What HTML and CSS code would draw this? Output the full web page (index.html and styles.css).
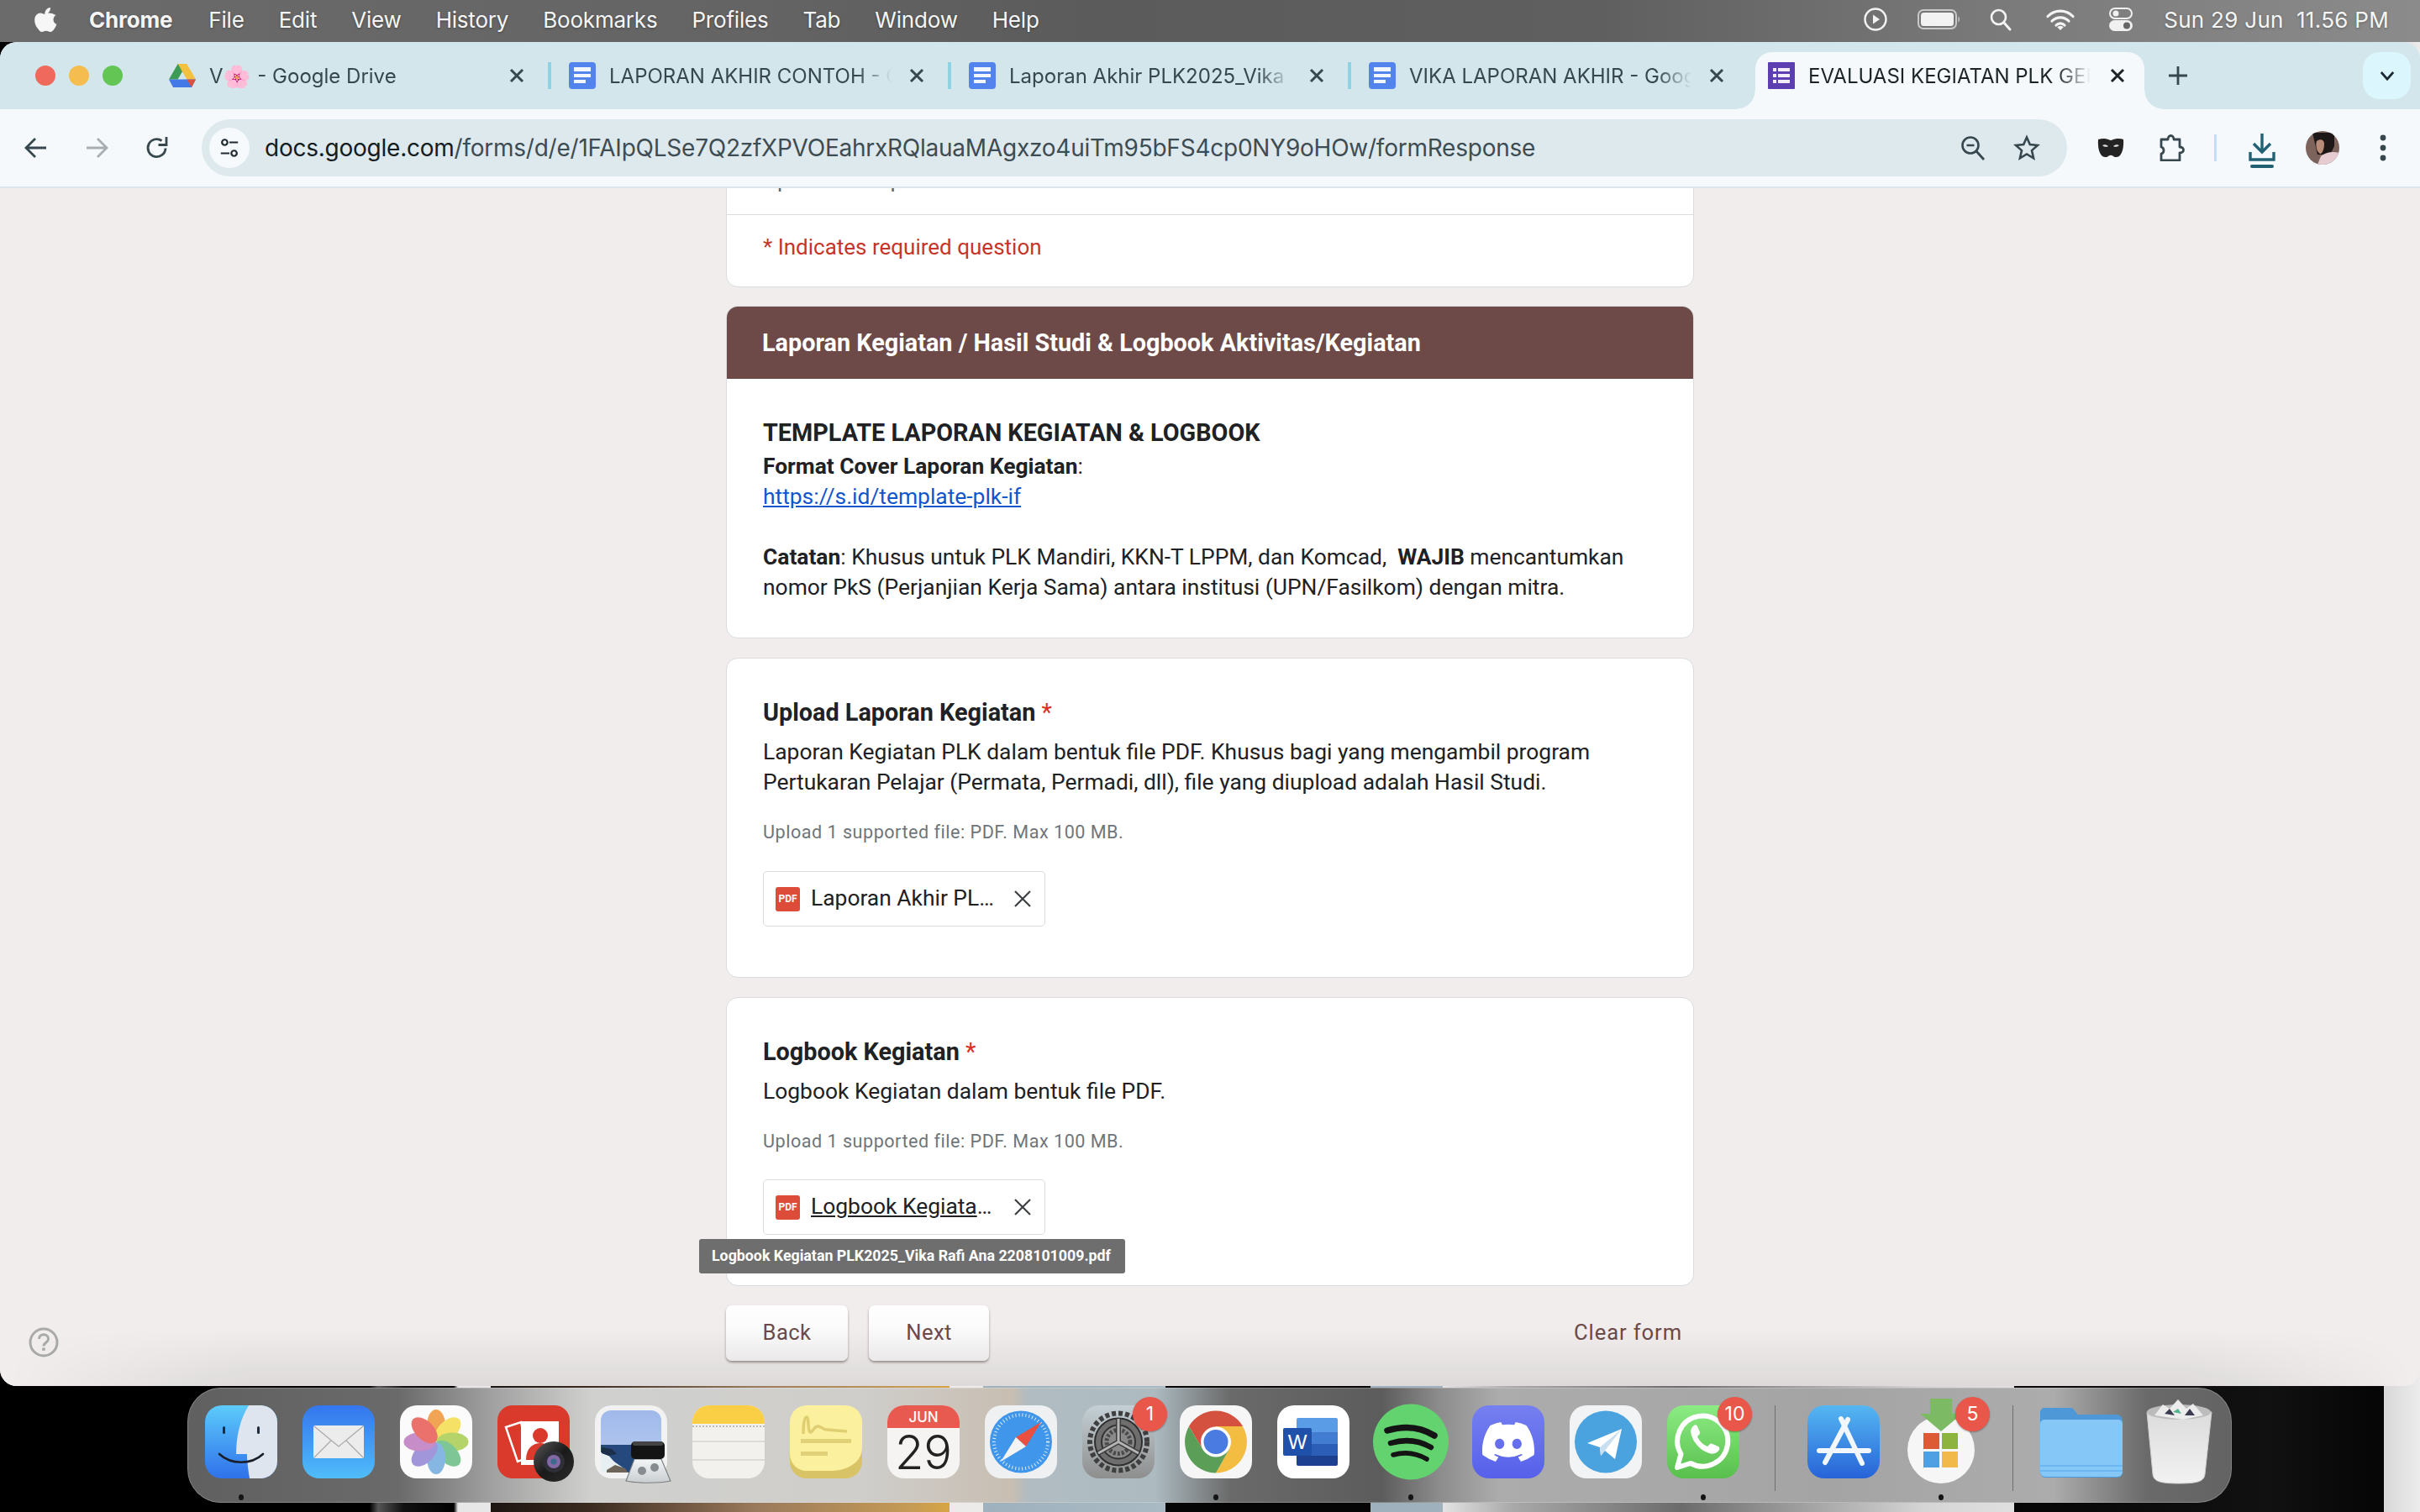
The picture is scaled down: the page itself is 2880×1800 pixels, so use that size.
FILE: index.html
```html
<!DOCTYPE html>
<html lang="en">
<head>
<meta charset="utf-8">
<title>EVALUASI KEGIATAN PLK</title>
<link rel="stylesheet" href="styles.css">
</head>
<body>
<svg class="defs" width="0" height="0">
  <defs>
    <symbol id="docs" viewBox="0 0 32 32"><rect width="32" height="32" rx="4" fill="#5383ec"/><rect x="6" y="6" width="20" height="5" fill="#f2f6fd"/><rect x="6" y="14" width="20" height="4" fill="#f2f6fd"/><rect x="6" y="21" width="14" height="4" fill="#f2f6fd"/></symbol>
    <symbol id="closex" viewBox="0 0 20 20"><path d="M3 3 17 17M17 3 3 17" fill="none" stroke="currentColor" stroke-width="3"/></symbol>
    <symbol id="thinx" viewBox="0 0 22 22"><path d="M2 2 20 20M20 2 2 20" fill="none" stroke="currentColor" stroke-width="2.2"/></symbol>
    <linearGradient id="gFinder" x1="0" y1="0" x2="0" y2="1"><stop offset="0" stop-color="#5dcbfb"/><stop offset="1" stop-color="#2f71ea"/></linearGradient>
    <linearGradient id="gMail" x1="0" y1="0" x2="0" y2="1"><stop offset="0" stop-color="#3476ee"/><stop offset="1" stop-color="#50bdf9"/></linearGradient>
    <linearGradient id="gStore" x1="0" y1="0" x2="0" y2="1"><stop offset="0" stop-color="#55b7f2"/><stop offset="1" stop-color="#2763d8"/></linearGradient>
    <linearGradient id="gSet" x1="0" y1="0" x2="0" y2="1"><stop offset="0" stop-color="#c4d0d6"/><stop offset="1" stop-color="#8e8e8e"/></linearGradient>
    <linearGradient id="gWa" x1="0" y1="0" x2="0" y2="1"><stop offset="0" stop-color="#8ceb84"/><stop offset="1" stop-color="#58c04d"/></linearGradient>
    <linearGradient id="gDis" x1="0" y1="0" x2="0" y2="1"><stop offset="0" stop-color="#7680f0"/><stop offset="1" stop-color="#5660ea"/></linearGradient>
    <linearGradient id="gTrash" x1="0" y1="0" x2="0" y2="1"><stop offset="0" stop-color="#dcdcdc"/><stop offset="1" stop-color="#f2f2f2"/></linearGradient>
    <linearGradient id="gLens" x1="0" y1="0" x2="1" y2="1"><stop offset="0" stop-color="#5a5a5a"/><stop offset=".5" stop-color="#1a1a1a"/><stop offset="1" stop-color="#2c2c2c"/></linearGradient>
    <linearGradient id="gGlass" x1="0" y1="0" x2="0" y2="1"><stop offset="0" stop-color="#f4f6f7"/><stop offset="1" stop-color="#c9ced1"/></linearGradient>
    <linearGradient id="gSky" x1="0" y1="0" x2="0" y2="1"><stop offset="0" stop-color="#a0b9ea"/><stop offset="1" stop-color="#b9cdf0"/></linearGradient>
  </defs>
</svg>

<div class="menubar">
  <div class="menu-left">
    <svg class="apple" viewBox="0 0 28 34"><path d="M20 3c.2 2.500-.8 4.300-2 5.700-1.300 1.400-2.900 2.300-4.700 2.100-.2-2.200.9-4.200 2-5.500C16.600 3.900 18.600 3 20 3zM26.500 12c-1.800 1.200-3 2.900-3 5.300 0 2.800 1.500 4.600 3.900 5.600-.8 2.200-1.700 4.100-3 5.900-1.400 2-2.700 3.200-4.500 3.200-1.900 0-2.700-1.200-5-1.200-2.400 0-3.200 1.200-5 1.200s-3.200-1.500-4.700-3.700C2.600 25.400 1.200 21.600 1.200 18c0-5.500 3.500-8.400 7-8.400 1.900 0 3.500 1.300 4.700 1.300 1.100 0 2.900-1.400 5.200-1.400 2.100 0 5.600.8 8.400 2.500z" fill="#f6f6f6"/></svg>
    <span class="menu-item menu-app">Chrome</span>
    <span class="menu-item">File</span>
    <span class="menu-item">Edit</span>
    <span class="menu-item">View</span>
    <span class="menu-item">History</span>
    <span class="menu-item">Bookmarks</span>
    <span class="menu-item">Profiles</span>
    <span class="menu-item">Tab</span>
    <span class="menu-item">Window</span>
    <span class="menu-item">Help</span>
  </div>
  <div class="menu-right">
    <svg class="mx" viewBox="0 0 30 30"><circle cx="15" cy="15" r="12.500" fill="none" stroke="#f4f4f4" stroke-width="2.400"/><path d="M12 9.500v11l8-5.500z" fill="#f4f4f4"/></svg>
    <svg class="mx-b" viewBox="0 0 52 28"><rect x="1" y="3" width="45" height="22" rx="6" fill="none" stroke="#c9c9c9" stroke-width="2"/><rect x="4" y="6" width="39" height="16" rx="3.500" fill="#f2f2f2"/><path d="M48.500 10.500c2 .8 2 6.200 0 7z" fill="#c9c9c9"/></svg>
    <svg class="mx mx-s" viewBox="0 0 30 30"><circle cx="12.500" cy="12.500" r="8.500" fill="none" stroke="#f4f4f4" stroke-width="2.600"/><path d="M18.700 18.700 26 27" stroke="#f4f4f4" stroke-width="3" stroke-linecap="round"/></svg>
    <svg class="mx-w" viewBox="0 0 36 28"><path d="M3 10.500a21 21 0 0 1 30 0M8 16a14 14 0 0 1 20 0M13 21a7 7 0 0 1 10 0" fill="none" stroke="#f4f4f4" stroke-width="3.200" stroke-linecap="round"/><path d="M18 27l-3.800-3.800a5.400 5.400 0 0 1 7.600 0z" fill="#f4f4f4"/></svg>
    <svg class="mx-c" viewBox="0 0 30 30"><rect x="2" y="2" width="26" height="12" rx="6" fill="none" stroke="#f0f0f0" stroke-width="2"/><circle cx="9" cy="8" r="3.500" fill="#f0f0f0"/><rect x="1" y="16" width="28" height="13" rx="6.500" fill="#f0f0f0"/><circle cx="22" cy="22.500" r="4" fill="#666"/></svg>
    <span class="clock">Sun 29 Jun&nbsp; 11.56 PM</span>
  </div>
</div>

<div class="window">
  <div class="tabstrip">
    <div class="lights"><span class="light red"></span><span class="light yellow"></span><span class="light green"></span></div>
    <div class="tab">
      <svg class="tab-icon" viewBox="0 0 32 28"><path d="M10.700 0h10.600L10.600 18.500 0 18.500z" fill="#3d9b55"/><path d="M21.300 0 32 18.500H21.300L10.700 0z" fill="#f4c13f"/><path d="M0 18.500h32l-5 9.500H5z" fill="#4379e6"/><path d="M21.300 18.500H32l-5 9.500z" fill="#d9533e"/></svg>
      <span class="tab-title"><span class="tab-v">V</span><span class="emoji">🌸</span> - Google Drive</span>
      <svg class="tab-x"><use href="#closex"/></svg>
    </div>
    <div class="tab">
      <svg class="tab-icon"><use href="#docs"/></svg>
      <span class="tab-title">LAPORAN AKHIR CONTOH - Google Docs</span>
      <svg class="tab-x"><use href="#closex"/></svg>
    </div>
    <div class="tab">
      <svg class="tab-icon"><use href="#docs"/></svg>
      <span class="tab-title">Laporan Akhir PLK2025_Vika Rafi Ana</span>
      <svg class="tab-x"><use href="#closex"/></svg>
    </div>
    <div class="tab tab-last">
      <svg class="tab-icon"><use href="#docs"/></svg>
      <span class="tab-title">VIKA LAPORAN AKHIR - Google Docs</span>
      <svg class="tab-x"><use href="#closex"/></svg>
    </div>
    <div class="tab tab-active">
      <svg class="tab-icon" viewBox="0 0 32 32"><rect width="32" height="32" rx="1" fill="#5e3fb1"/><g fill="#f1edf9"><rect x="6" y="7" width="4" height="4"/><rect x="6" y="14" width="4" height="4"/><rect x="6" y="21" width="4" height="4"/><rect x="12" y="7" width="14" height="4"/><rect x="12" y="14" width="14" height="4"/><rect x="12" y="21" width="14" height="4"/></g></svg>
      <span class="tab-title">EVALUASI KEGIATAN PLK GENAP</span>
      <svg class="tab-x"><use href="#closex"/></svg>
    </div>
    <svg class="newtab" viewBox="0 0 24 24"><path d="M12 1v22M1 12h22" stroke="#36474e" stroke-width="2.800" fill="none"/></svg>
    <div class="tabsearch"><svg viewBox="0 0 20 14" class="chev"><path d="M2 2l8 9 8-9" fill="none" stroke="#1c2a30" stroke-width="3"/></svg></div>
  </div>

  <div class="toolbar">
    <div class="slot"><svg class="ti" viewBox="0 0 32 32"><path d="M28 16H5M15 5 4 16l11 11" fill="none" stroke="#36474e" stroke-width="2.800"/></svg></div>
    <div class="slot"><svg class="ti" viewBox="0 0 32 32"><path d="M4 16h23M17 5l11 11-11 11" fill="none" stroke="#a6aeb2" stroke-width="2.800"/></svg></div>
    <div class="slot"><svg class="ti" viewBox="0 0 32 32"><path d="M26 16.500A10.500 10.500 0 1 1 21.500 7.500" fill="none" stroke="#36474e" stroke-width="2.800"/><path d="M27 3v9.500H17.500" fill="none" stroke="#36474e" stroke-width="2.800"/></svg></div>
    <div class="address">
      <div class="site-info"><svg viewBox="0 0 28 28" class="site-svg"><circle cx="8" cy="7" r="3.500" fill="none" stroke="#1f2a30" stroke-width="2.400"/><path d="M14 7h11M3 21h11" stroke="#1f2a30" stroke-width="2.400"/><circle cx="20" cy="21" r="3.500" fill="none" stroke="#1f2a30" stroke-width="2.400"/></svg></div>
      <div class="url"><span class="url-host">docs.google.com</span>/forms/d/e/1FAIpQLSe7Q2zfXPVOEahrxRQlauaMAgxzo4uiTm95bFS4cp0NY9oHOw/formResponse</div>
      <svg class="ti addr-zoom" viewBox="0 0 32 32"><circle cx="13" cy="13" r="9.500" fill="none" stroke="#36474e" stroke-width="2.600"/><path d="M8.500 13h9" stroke="#36474e" stroke-width="2.600"/><path d="M20 20l9 10" stroke="#36474e" stroke-width="2.800"/></svg>
      <svg class="ti addr-star" viewBox="0 0 32 32"><path d="M16 3.500l3.800 8.600 9.200.9-7 6.100 2.100 9.200-8.100-4.800-8.100 4.800 2.100-9.200-7-6.100 9.200-.9z" fill="none" stroke="#36474e" stroke-width="2.600"/></svg>
    </div>
    <div class="slot"><svg class="ti" viewBox="0 0 32 32"><path d="M1 6c5-1.500 10-1 13 .5 1 .5 3 .5 4 0C21 5 27 4.500 31 6c.5 8-.5 16-5 20-3 2-6 1-7.500-.5-1.500-1-3.500-1-5 0C12 27 9 28 6 26 1.500 22 .5 14 1 6z" fill="#232323"/><path d="M6 13c2-1.500 5-1 7 1-2 1.500-5 1-7-1zM26 13c-2-1.500-5-1-7 1 2 1.500 5 1 7-1z" fill="#dcdcdc"/></svg></div>
    <div class="slot"><svg class="ti" viewBox="0 0 32 32"><path d="M4 6h8c0-6 7-6 7 0h7v9c6 0 6 7 0 7v9H4v-8c4-1 4-7 0-8z" fill="none" stroke="#36474e" stroke-width="2.800" stroke-linejoin="round"/></svg></div>
    <div class="tb-sep"><span class="tb-sep-line"></span></div>
    <div class="slot"><svg class="dl" viewBox="0 0 32 44"><path d="M16 1v21M6 13l10 10 10-10" fill="none" stroke="#226173" stroke-width="3.400"/><path d="M2 23v9h28v-9" fill="none" stroke="#226173" stroke-width="3.400"/><rect x="2" y="38" width="28" height="4" rx="2" fill="#226173"/></svg></div>
    <div class="slot"><svg class="avatar" viewBox="0 0 40 40"><defs><clipPath id="av"><circle cx="20" cy="20" r="20"/></clipPath></defs><g clip-path="url(#av)"><rect width="40" height="40" fill="#7c635c"/><path d="M8 2h26v16l-5 10H14z" fill="#1d1718"/><path d="M13 12c4-3 9-2 9 3 0 6-2 12-5 12-3-1-6-9-4-15z" fill="#b98c78"/><path d="M18 30c6-5 14-6 22-4v14H14z" fill="#e6cbd0"/></g></svg></div>
    <div class="slot"><svg class="dots3" viewBox="0 0 8 32"><circle cx="4" cy="4" r="3.400" fill="#36474e"/><circle cx="4" cy="16" r="3.400" fill="#36474e"/><circle cx="4" cy="28" r="3.400" fill="#36474e"/></svg></div>
  </div>

  <main class="page">
    <div class="form">
      <section class="card intro">
        <div class="intro-email">Upload file laporan dan hasil studi akhir</div>
        <div class="required">* Indicates required question</div>
      </section>

      <section class="card section">
        <h2 class="section-head">Laporan Kegiatan / Hasil Studi &amp; Logbook Aktivitas/Kegiatan</h2>
        <div class="section-body">
          <div class="template-title">TEMPLATE LAPORAN KEGIATAN &amp; LOGBOOK</div>
          <div class="line"><b>Format Cover Laporan Kegiatan</b>:</div>
          <div class="line"><a class="link" href="#">https://s.id/template-plk-if</a></div>
          <div class="line">&nbsp;</div>
          <div class="line"><b>Catatan</b>: Khusus untuk PLK Mandiri, KKN-T LPPM, dan Komcad,&nbsp; <b>WAJIB</b> mencantumkan</div>
          <div class="line">nomor PkS (Perjanjian Kerja Sama) antara institusi (UPN/Fasilkom) dengan mitra.</div>
        </div>
      </section>

      <section class="card question">
        <h3 class="q-title">Upload Laporan Kegiatan <span class="star">*</span></h3>
        <div class="line">Laporan Kegiatan PLK dalam bentuk file PDF. Khusus bagi yang mengambil program</div>
        <div class="line">Pertukaran Pelajar (Permata, Permadi, dll), file yang diupload adalah Hasil Studi.</div>
        <div class="hint">Upload 1 supported file: PDF. Max 100 MB.</div>
        <div class="chip">
          <span class="pdf">PDF</span>
          <span class="chip-name">Laporan Akhir PLK2025_Vika Rafi Ana 2208101009.pdf</span>
          <svg class="chip-x"><use href="#thinx"/></svg>
        </div>
      </section>

      <section class="card question">
        <h3 class="q-title">Logbook Kegiatan <span class="star">*</span></h3>
        <div class="line">Logbook Kegiatan dalam bentuk file PDF.</div>
        <div class="hint">Upload 1 supported file: PDF. Max 100 MB.</div>
        <div class="chip">
          <span class="pdf">PDF</span>
          <span class="chip-name chip-hover">Logbook Kegiatan PLK2025_Vika Rafi Ana 2208101009.pdf</span>
          <svg class="chip-x"><use href="#thinx"/></svg>
          <div class="tooltip">Logbook Kegiatan PLK2025_Vika Rafi Ana 2208101009.pdf</div>
        </div>
      </section>

      <div class="nav">
        <div class="nav-btns"><span class="btn btn-back">Back</span><span class="btn btn-next">Next</span></div>
        <span class="clear">Clear form</span>
      </div>
    </div>
    <svg class="help" viewBox="0 0 36 36"><circle cx="18" cy="18" r="16" fill="none" stroke="#a9a9a9" stroke-width="3"/><path d="M12.500 14c0-7 11-7 11 0 0 4.500-5.500 4-5.500 8.500" fill="none" stroke="#a9a9a9" stroke-width="3"/><rect x="16.300" y="24.500" width="3.400" height="3.400" fill="#a9a9a9"/></svg>
    <div class="dock-shade"></div>
  </main>
</div>

<div class="dock">
  <div class="app has-dot"><svg viewBox="0 0 86 87"><rect width="86" height="87" rx="20" fill="url(#gFinder)"/><path d="M52 0H66A20 20 0 0 1 86 20V67A20 20 0 0 1 66 87H53C51 75 50 66 50 58H37C37 36 42 16 52 0z" fill="#dfe5ee"/><rect x="21" y="25" width="3" height="9" rx="1.500" fill="#1d2b3a"/><rect x="62" y="25" width="3" height="9" rx="1.500" fill="#1d2b3a"/><path d="M17 58c14 13 38 13 52 0" fill="none" stroke="#1a1f2a" stroke-width="2.600" stroke-linecap="round"/></svg></div>
  <div class="app"><svg viewBox="0 0 86 87"><rect width="86" height="87" rx="20" fill="url(#gMail)"/><rect x="13" y="24" width="60" height="39" rx="2" fill="#ececec"/><path d="M14 25l29 24 29-24M14 62l20-20M72 62 52 42" fill="none" stroke="#a9a9a9" stroke-width="1.200"/></svg></div>
  <div class="app"><svg viewBox="0 0 86 87"><rect width="86" height="87" rx="20" fill="#fbfbfb"/><g opacity=".82"><ellipse cx="43" cy="24" rx="11" ry="19" fill="#f0922f"/><ellipse cx="43" cy="24" rx="11" ry="19" fill="#f4dc46" transform="rotate(45 43 43.500)"/><ellipse cx="43" cy="24" rx="11" ry="19" fill="#a5cc4b" transform="rotate(90 43 43.500)"/><ellipse cx="43" cy="24" rx="11" ry="19" fill="#63bb80" transform="rotate(135 43 43.500)"/><ellipse cx="43" cy="24" rx="11" ry="19" fill="#6da9dd" transform="rotate(180 43 43.500)"/><ellipse cx="43" cy="24" rx="11" ry="19" fill="#8d80d2" transform="rotate(225 43 43.500)"/><ellipse cx="43" cy="24" rx="11" ry="19" fill="#bb75bd" transform="rotate(270 43 43.500)"/><ellipse cx="43" cy="24" rx="11" ry="19" fill="#e8554d" transform="rotate(315 43 43.500)"/></g></svg></div>
  <div class="app"><svg viewBox="0 0 86 87"><rect width="86" height="87" rx="18" fill="#d93a2b"/><path d="M10 26l18-6 10 42-14 5z" fill="none" stroke="#fff" stroke-width="2.500"/><rect x="28" y="19" width="45" height="52" fill="#fff"/><circle cx="51" cy="36" r="9" fill="#d93a2b"/><path d="M34 65c0-14 8-20 17-20s17 6 17 20z" fill="#d93a2b"/><circle cx="67" cy="67" r="24" fill="url(#gLens)"/><circle cx="67" cy="67" r="13" fill="#2e2e36"/><circle cx="67" cy="67" r="8" fill="#8268a5"/><circle cx="67" cy="67" r="3.500" fill="#3b6a8a"/></svg></div>
  <div class="app"><svg viewBox="0 0 86 87"><rect width="86" height="87" rx="20" fill="#f2f2f2"/><path d="M7 18A12 12 0 0 1 19 6H67A12 12 0 0 1 79 18V80H7z" fill="url(#gSky)"/><path d="M7 47H79V80H7z" fill="#25497c"/><path d="M7 56c6 0 10 4 14 9s12 7 18 15H7z" fill="#e7eff3"/><path d="M8 50l12 2 6 6-10 2-8-3z" fill="#1c2f4a"/><path d="M14 77l10-6 12 4 3 5H14z" fill="#6d6459"/><path d="M47 64H79L90 90C76 93 51 93 37 90z" fill="url(#gGlass)" stroke="#7a7f82" stroke-width="1.200"/><rect x="43" y="43" width="40" height="21" rx="5" fill="#141414"/><rect x="45" y="43" width="36" height="5" rx="2.500" fill="#444"/><circle cx="56" cy="78" r="5" fill="#868c90"/><circle cx="71" cy="74" r="5" fill="#868c90"/></svg></div>
  <div class="app"><svg viewBox="0 0 86 87"><rect width="86" height="87" rx="20" fill="#f2f1ee"/><path d="M0 22V20A20 20 0 0 1 20 0H66A20 20 0 0 1 86 20V22z" fill="#fbcf45"/><path d="M0 25h86" stroke="#aaa" stroke-width="1.500" stroke-dasharray="2 2"/><path d="M0 43h86M0 65h86" stroke="#dcdbd8" stroke-width="2"/></svg></div>
  <div class="app"><svg viewBox="0 0 86 87"><rect y="12" width="86" height="75" rx="20" fill="#d8c467"/><path d="M20 0H66A20 20 0 0 1 86 20V50C86 68 68 78 50 78H20A20 20 0 0 1 0 58V20A20 20 0 0 1 20 0z" fill="#fbf09e"/><path d="M16 34c0-10 1-20 4-20s1 20 5 18 4-8 9-7 5 4 10 4l24 2" fill="none" stroke="#dfcf72" stroke-width="3.500"/><rect x="13" y="40" width="60" height="5" fill="#e0d077"/><rect x="13" y="55" width="32" height="5" fill="#e0d077"/></svg></div>
  <div class="app"><svg viewBox="0 0 86 87"><rect width="86" height="87" rx="20" fill="#f5f4f2"/><path d="M0 27V20A20 20 0 0 1 20 0H66A20 20 0 0 1 86 20V27z" fill="#e85a4f"/><text x="43" y="20" text-anchor="middle" class="cal-month">JUN</text><text x="43" y="76" text-anchor="middle" class="cal-day">29</text></svg></div>
  <div class="app"><svg viewBox="0 0 86 87"><rect width="86" height="87" rx="20" fill="#eef0f1"/><circle cx="43" cy="43.500" r="37" fill="#3f96ea"/><circle cx="43" cy="43.500" r="32" fill="none" stroke="#d9ecfb" stroke-width="4" stroke-dasharray="1 3"/><path d="M67 20 37 38 49 49z" fill="#ea4f3f"/><path d="M19 67 49 49 37 38z" fill="#f4f4f4"/></svg></div>
  <div class="app"><svg viewBox="0 0 86 87"><rect width="86" height="87" rx="20" fill="url(#gSet)"/><circle cx="43" cy="43.500" r="34" fill="none" stroke="#3f3f3f" stroke-width="6" stroke-dasharray="5 3"/><circle cx="43" cy="43.500" r="28" fill="#6e6e6e" stroke="#2f2f2f" stroke-width="2"/><circle cx="43" cy="43.500" r="20" fill="#8a8a8a" stroke="#333" stroke-width="2"/><circle cx="43" cy="43.500" r="14" fill="none" stroke="#4a4a4a" stroke-width="5" stroke-dasharray="3 2"/><path d="M43 43.500V16M43 43.500 67 57M43 43.500 19 57" stroke="#3c3c3c" stroke-width="6"/><path d="M43 43.500V16M43 43.500 67 57M43 43.500 19 57" stroke="#b5b5b5" stroke-width="3"/></svg><span class="badge">1</span></div>
  <div class="app has-dot"><svg viewBox="0 0 86 87"><rect width="86" height="87" rx="20" fill="#f6f6f6"/><path d="M11 25A37 37 0 0 1 75 25H43L27 52Z" fill="#d4513f"/><path d="M75 25A37 37 0 0 1 43 80.500L59 52 43 25Z" fill="#f3bd42"/><path d="M43 80.500A37 37 0 0 1 11 25L27 52H59Z" fill="#5a9e58"/><circle cx="43" cy="43.500" r="18" fill="#fff"/><circle cx="43" cy="43.500" r="14.500" fill="#4a7be0"/></svg></div>
  <div class="app"><svg viewBox="0 0 86 87"><rect width="86" height="87" rx="20" fill="#fff"/><rect x="23" y="15" width="49" height="19" rx="2" fill="#5a9de6"/><rect x="23" y="32" width="49" height="14" fill="#427dd2"/><rect x="23" y="46" width="49" height="14" fill="#2c5db7"/><path d="M23 60h49v10a2 2 0 0 1-2 2H25a2 2 0 0 1-2-2z" fill="#1d4091"/><rect x="7" y="27" width="34" height="33" rx="2" fill="#1f50aa"/><text x="24" y="52" text-anchor="middle" class="word-w">W</text></svg></div>
  <div class="app has-dot"><svg viewBox="0 0 86 87"><circle cx="43" cy="43.500" r="45" fill="#62d36f"/><path d="M15 30c20-6 40-4 56 6" fill="none" stroke="#141414" stroke-width="7.500" stroke-linecap="round"/><path d="M19 45c17-5 34-3 48 5" fill="none" stroke="#141414" stroke-width="6.500" stroke-linecap="round"/><path d="M22 59c14-4 28-2 40 5" fill="none" stroke="#141414" stroke-width="5.500" stroke-linecap="round"/></svg></div>
  <div class="app"><svg viewBox="0 0 86 87"><rect width="86" height="87" rx="20" fill="url(#gDis)"/><svg x="12" y="20" width="62" height="47" viewBox="0 0 127.140 96.360"><path fill="#fff" d="M107.700,8.070A105.150,105.150,0,0,0,81.470,0a72.060,72.060,0,0,0-3.360,6.830A97.680,97.680,0,0,0,49,6.830,72.370,72.370,0,0,0,45.640,0,105.890,105.890,0,0,0,19.390,8.090C2.790,32.650-1.710,56.600.54,80.210h0A105.730,105.730,0,0,0,32.710,96.360,77.700,77.700,0,0,0,39.600,85.250a68.420,68.420,0,0,1-10.850-5.180c.91-.66,1.800-1.340,2.660-2a75.570,75.570,0,0,0,64.320,0c.87.710,1.760,1.390,2.660,2a68.680,68.680,0,0,1-10.870,5.190,77,77,0,0,0,6.890,11.100A105.250,105.250,0,0,0,126.600,80.220h0C129.240,52.840,122.090,29.110,107.700,8.070ZM42.450,65.690C36.180,65.690,31,60,31,53s5-12.740,11.430-12.740S54,46,53.890,53,48.840,65.690,42.450,65.690Zm42.240,0C78.410,65.690,73.250,60,73.250,53s5-12.740,11.440-12.740S96.230,46,96.120,53,91.080,65.690,84.690,65.690Z"/></svg></svg></div>
  <div class="app"><svg viewBox="0 0 86 87"><rect width="86" height="87" rx="20" fill="#f2f3f4"/><circle cx="43" cy="43.500" r="37" fill="#4aa2de"/><path d="M21 45 62 28 54 64 42 54 37 60 36 50z" fill="#fff"/><path d="M36 50 62 28 42 54 37 60z" fill="#c9dff0"/></svg></div>
  <div class="app has-dot"><svg viewBox="0 0 86 87"><rect width="86" height="87" rx="20" fill="url(#gWa)"/><path d="M12 74l4.500-16A30 30 0 1 1 28 69z" fill="none" stroke="#fff" stroke-width="6" stroke-linejoin="round"/><path d="M32 24c-3 2-5 6-3 12 3 9 11 18 21 21 6 2 10-1 12-4 1-2 0-3-1-4l-7-3c-2-1-3 0-4 1l-2 2c-5-2-10-7-12-12l2-2c1-1 1-2 1-3l-3-7c-1-2-3-2-4-1z" fill="#fff"/></svg><span class="badge">10</span></div>
  <div class="dock-sep"></div>
  <div class="app"><svg viewBox="0 0 86 87"><rect width="86" height="87" rx="20" fill="url(#gStore)"/><path d="M40 16 65 69M48 17 21 68M14 54H73" fill="none" stroke="#f2f7fd" stroke-width="6" stroke-linecap="round"/></svg></div>
  <div class="app has-dot"><svg viewBox="0 0 86 87"><rect x="3" y="13" width="80" height="80" rx="40" fill="#f6f6f6"/><path d="M30 -8H56V10H68L43 31 18 10H30z" fill="#7cbb64"/><rect x="22" y="33" width="19" height="19" fill="#dc5b35"/><rect x="44" y="33" width="19" height="19" fill="#8db43f"/><rect x="22" y="55" width="19" height="19" fill="#4ea0e3"/><rect x="44" y="55" width="19" height="19" fill="#f1b94a"/></svg><span class="badge">5</span></div>
  <div class="dock-sep"></div>
  <div class="app"><svg viewBox="0 0 86 87"><path d="M-6 8a5 5 0 0 1 5-5H30c4 0 6 5 9 8H85a7 7 0 0 1 7 7V80a6 6 0 0 1-6 6H0a6 6 0 0 1-6-6z" fill="#4f98d8"/><path d="M-6 22a5 5 0 0 1 5-5H87a5 5 0 0 1 5 5V79a6 6 0 0 1-6 6H0a6 6 0 0 1-6-6z" fill="#85c8f7"/><path d="M-6 72H92M-6 78H92" stroke="#6db6ee" stroke-width="2"/></svg></div>
  <div class="app"><svg viewBox="0 0 86 87"><path d="M5 8H82L74 82C73 90 67 93 43 93S13 90 12 82z" fill="url(#gTrash)" stroke="#cfcfcf"/><ellipse cx="43" cy="8" rx="38" ry="9" fill="#bcbcbc"/><path d="M14 12l10-13 8 5 10-11 10 11 8-6 12 14-24 5z" fill="#ececec"/><path d="M26 10l6-6 6 8zM50 12l6-8 6 8z" fill="#3c3c50"/><path d="M36 8l6-4 4 6z" fill="#55b38b"/></svg></div>
</div>
</body>
</html>
```
FILE: styles.css
```css
* { box-sizing: border-box; }
html, body { margin: 0; padding: 0; }
body {
  position: relative;
  width: 2880px;
  height: 1800px;
  overflow: hidden;
  font-family: "Roboto", "Liberation Sans", sans-serif;
  color: #202124;
  background: linear-gradient(90deg,
    #000 0, #000 440px, #555 450px, #111 480px, #000 540px,
    #e7e7e7 545px, #e7e7e7 584px,
    #1c1512 584px, #3a2a20 700px, #9a7a5c 900px, #c49a55 1080px, #d7a544 1130px,
    #ecebe9 1130px, #ecebe9 1170px,
    #9fb1bd 1170px, #a9bac4 1387px,
    #050505 1387px, #050505 1631px,
    #9fb1bd 1631px, #9fb1bd 1717px,
    #e3e3e3 1717px, #a9a9a9 1800px, #6b6b6b 2000px, #d5d5d5 2290px, #e0e0e0 2397px,
    #060606 2397px, #111 2700px, #050505 2837px,
    #d8d8d8 2837px, #ececec 2880px);
}
.defs { position: absolute; }

/* Menu bar */
.menubar {
  height: 50px;
  padding: 0 37px 4px 40px;
  display: flex;
  align-items: center;
  justify-content: space-between;
  color: #f6f6f6;
  font-family: "Inter", "Liberation Sans", sans-serif;
  font-size: 26px;
  background: linear-gradient(90deg, #6b6b6b 0, #646464 900px, #5b5b5b 1300px, #5f5f5f 1900px, #7b7b7b 2400px, #8b8b8b 2880px);
}
.menu-left, .menu-right { display: flex; align-items: center; }
.apple { width: 28px; height: 34px; margin-right: 38px; }
.menu-item { margin-right: 41px; letter-spacing: -0.2px; text-shadow: 0 1px 3px rgba(0,0,0,.35); }
.menu-app { font-weight: 700; margin-right: 43px; }
.mx { width: 30px; height: 30px; margin-right: 35px; }
.mx-s { margin-right: 38px; }
.mx-b { width: 52px; height: 28px; margin-right: 32px; }
.mx-w { width: 36px; height: 28px; margin-right: 39px; }
.mx-c { width: 30px; height: 30px; margin-right: 36px; }
.clock { letter-spacing: 0.3px; text-shadow: 0 1px 3px rgba(0,0,0,.3); }

/* Window */
.window {
  position: absolute;
  left: 0;
  top: 50px;
  width: 2880px;
  height: 1600px;
  display: flex;
  flex-direction: column;
  border-radius: 20px;
  overflow: hidden;
  background: #f0edec;
}
.tabstrip {
  height: 80px;
  flex: none;
  display: flex;
  align-items: flex-start;
  padding-top: 12px;
  background: #d3e6eb;
  font-family: "Inter", "Liberation Sans", sans-serif;
  font-size: 24px;
  color: #36474e;
}
.lights { width: 178px; height: 56px; flex: none; display: flex; align-items: center; gap: 16px; padding-left: 42px; }
.light { width: 24px; height: 24px; border-radius: 50%; }
.red { background: #ef6a5c; }
.yellow { background: #f5bd4f; }
.green { background: #62c554; }
.tab {
  position: relative;
  width: 476px;
  height: 56px;
  flex: none;
  display: flex;
  align-items: center;
  padding: 0 29px 0 23px;
}
.tab::after {
  content: "";
  position: absolute;
  right: -2px;
  top: 12px;
  width: 4px;
  height: 32px;
  background: #8fd3e2;
}
.tab-last::after { display: none; }
.tab-icon { width: 32px; height: 32px; flex: none; }
.tab-title {
  flex: 1;
  min-width: 0;
  margin: 0 20px 0 16px;
  white-space: nowrap;
  overflow: hidden;
  -webkit-mask-image: linear-gradient(90deg, #000 88%, transparent 100%);
  mask-image: linear-gradient(90deg, #000 88%, transparent 100%);
}
.tab-v { letter-spacing: -2px; }
.emoji { font-size: 27px; line-height: 24px; vertical-align: -2px; margin: 0 1px 0 1px; }
.tab-x { width: 20px; height: 20px; flex: none; color: #36474e; }
.tab-active {
  width: 463px;
  height: 68px;
  margin-left: 7px;
  padding: 0 22px 12px 15px;
  background: #f5f9fc;
  border-radius: 20px 20px 0 0;
  color: #1c2327;
}
.tab-active .tab-x { color: #1c2327; }
.tab-active .tab-title { margin-right: 22px; }
.tab-active::before {
  content: "";
  position: absolute;
  left: -22px;
  bottom: 0;
  width: 22px;
  height: 22px;
  background: radial-gradient(circle at 0 0, #d3e6eb 21px, #f5f9fc 22px);
}
.tab-active::after {
  right: -22px;
  top: auto;
  bottom: 0;
  width: 22px;
  height: 22px;
  background: radial-gradient(circle at 100% 0, #d3e6eb 21px, #f5f9fc 22px);
}
.newtab { width: 24px; height: 24px; margin: 16px 0 0 28px; flex: none; }
.tabsearch {
  width: 57px;
  height: 56px;
  margin-left: 208px;
  flex: none;
  display: flex;
  align-items: center;
  justify-content: center;
  border-radius: 20px;
  background: #dcf6fd;
}
.chev { width: 18px; height: 13px; }

.toolbar {
  height: 94px;
  flex: none;
  display: flex;
  align-items: center;
  padding: 0 8px 0 7px;
  background: #f5f9fc;
  border-bottom: 2px solid #dde6ea;
}
.slot { width: 72px; height: 68px; flex: none; display: flex; align-items: center; justify-content: center; }
.ti { width: 32px; height: 32px; flex: none; }
.address {
  width: 2220px;
  height: 68px;
  flex: none;
  margin: 0 16px 0 17px;
  display: flex;
  align-items: center;
  padding: 0 16px 0 9px;
  border-radius: 34px;
  background: #dee9ee;
  font-family: "Inter", "Liberation Sans", sans-serif;
  font-size: 28px;
  color: #3d4c52;
}
.site-info { width: 48px; height: 48px; flex: none; border-radius: 50%; background: #f6fafc; display: flex; align-items: center; justify-content: center; margin-right: 18px; }
.site-svg { width: 26px; height: 26px; }
.url { flex: 1; white-space: nowrap; overflow: hidden; letter-spacing: -0.24px; }
.url-host { color: #151c20; }
.addr-zoom { margin-right: 32px; }
.addr-star { margin-right: 16px; }
.tb-sep { width: 36px; height: 68px; flex: none; display: flex; align-items: center; padding-left: 15px; }
.tb-sep-line { width: 3px; height: 32px; background: #b5e6f7; }
.dl { width: 32px; height: 44px; margin-top: 8px; }
.avatar { width: 40px; height: 40px; }
.dots3 { width: 8px; height: 32px; }

/* Page */
.page {
  position: relative;
  flex: 1;
  min-height: 0;
  overflow: hidden;
  background: #f0edec;
}
.form {
  width: 1152px;
  margin: -27px auto 0;
  display: flex;
  flex-direction: column;
  gap: 23px;
}
.card {
  background: #fff;
  border: 1px solid #dadce0;
  border-radius: 14px;
  font-size: 26.4px;
  line-height: 36px;
}
.intro { margin-bottom: -1px; }
.intro-email { height: 58px; padding: 0 43px; border-bottom: 1px solid #dadce0; line-height: 32px; color: #5f6368; white-space: nowrap; overflow: hidden; }
.required { padding: 20px 43px 29px; color: #c5352a; font-size: 26px; }
.section { overflow: hidden; }
.section-head {
  height: 87px;
  margin: -1px -1px 0;
  padding: 0 43px;
  display: flex;
  align-items: center;
  background: #6d4a47;
  color: #fff;
  font-size: 28.8px;
  font-weight: 700;
}
.section-body { padding: 42px 43px 42px; }
.template-title { font-size: 28.8px; line-height: 44px; font-weight: 700; }
.line { white-space: nowrap; }
.line b { font-weight: 700; }
.link { color: #1155cc; }
.question { padding: 46px 43px 60px; }
.question + .question .chip { margin-top: 27px; }
.q-title { margin: 0 0 11px; font-size: 28.8px; line-height: 36px; font-weight: 700; }
.star { color: #d93025; font-weight: 400; }
.hint { margin-top: 24px; font-size: 21.6px; color: #70757a; letter-spacing: 0.5px; }
.chip {
  position: relative;
  width: 336px;
  height: 66px;
  margin-top: 28px;
  display: flex;
  align-items: center;
  padding: 0 15px 0 14px;
  border: 1px solid #dadce0;
  border-radius: 5px;
}
.pdf {
  width: 29px;
  height: 29px;
  flex: none;
  border-radius: 3px;
  background: #dd4b39;
  color: #fff;
  font-size: 12px;
  font-weight: 700;
  line-height: 29px;
  text-align: center;
}
.chip-name { width: 219px; margin: 0 0 2px 13px; white-space: nowrap; overflow: hidden; text-overflow: ellipsis; }
.chip-hover { text-decoration: underline; }
.chip-x { width: 22px; height: 22px; flex: none; margin-left: 23px; color: #3c4043; }
.tooltip {
  position: absolute;
  left: -77px;
  top: 70px;
  width: 507px;
  height: 41px;
  padding-left: 15px;
  border-radius: 3px;
  background: #6e6e6e;
  color: #fff;
  font-size: 17.8px;
  font-weight: 700;
  line-height: 39px;
  white-space: nowrap;
  z-index: 2;
}
.nav { display: flex; align-items: center; justify-content: space-between; }
.nav-btns { display: flex; gap: 25px; }
.btn {
  height: 66px;
  display: flex;
  align-items: center;
  justify-content: center;
  padding-bottom: 2px;
  border-radius: 7px;
  background: linear-gradient(#fff, #f6f4f4);
  box-shadow: 0 2px 3px rgba(60,40,40,.45);
  color: #6d4a47;
  font-size: 25.6px;
  letter-spacing: 0.4px;
}
.btn-back { width: 145px; }
.btn-next { width: 143px; }
.clear { margin: 0 14px 2px 0; color: #6d4a47; font-size: 25.6px; letter-spacing: 0.9px; }
.help { position: absolute; left: 34px; top: 1356px; width: 36px; height: 36px; }
.dock-shade {
  position: absolute;
  left: 0;
  right: 0;
  bottom: 0;
  height: 70px;
  background: linear-gradient(90deg, transparent 0, #000 300px, #000 2600px, transparent 2880px);
  opacity: 0.08;
  -webkit-mask-image: linear-gradient(transparent, #000);
  mask-image: linear-gradient(transparent, #000);
}

/* Dock */
.dock {
  position: absolute;
  left: 223px;
  top: 1652px;
  width: 2433px;
  height: 137px;
  display: flex;
  gap: 30px;
  padding: 20px 19px 0 20px;
  border-radius: 40px;
  border: 1px solid rgba(255,255,255,.22);
  background: linear-gradient(90deg,
    #606060 0, #6a6a6a 250px, #a0a0a0 360px, #d0d0ce 480px, #cfcecb 800px, #c8beb2 980px,
    #b0bcc2 1000px, #adbbc1 1150px, #6a6a6a 1240px, #5c5c5c 1420px, #8d8d8d 1490px, #acacac 1560px,
    #a4a4a4 1950px, #acacac 2220px, #6a6a6a 2330px, #636363 2433px);
}
.app { position: relative; width: 86px; height: 87px; flex: none; }
.app > svg { display: block; width: 86px; height: 87px; overflow: visible; }
.has-dot::after {
  content: "";
  position: absolute;
  left: 40px;
  top: 106px;
  width: 6px;
  height: 7px;
  border-radius: 50%;
  background: #141414;
}
.badge {
  position: absolute;
  left: 60px;
  top: -10px;
  width: 41px;
  height: 41px;
  border-radius: 50%;
  background: #e8574a;
  color: #fff;
  font-family: "Inter", "Liberation Sans", sans-serif;
  font-size: 23px;
  line-height: 41px;
  text-align: center;
  box-shadow: 0 1px 2px rgba(0,0,0,.3);
}
.dock-sep { width: 1px; height: 102px; margin: 0 8px 0 12px; background: #6f6f6f; flex: none; }
.cal-month { font-family: "Inter", sans-serif; font-size: 17px; fill: #fff; font-weight: 500; }
.cal-day { font-family: "Inter", sans-serif; font-size: 56px; fill: #222; font-weight: 300; }
.word-w { font-family: "Liberation Sans", sans-serif; font-size: 24px; fill: #fff; font-weight: 400; }
```
